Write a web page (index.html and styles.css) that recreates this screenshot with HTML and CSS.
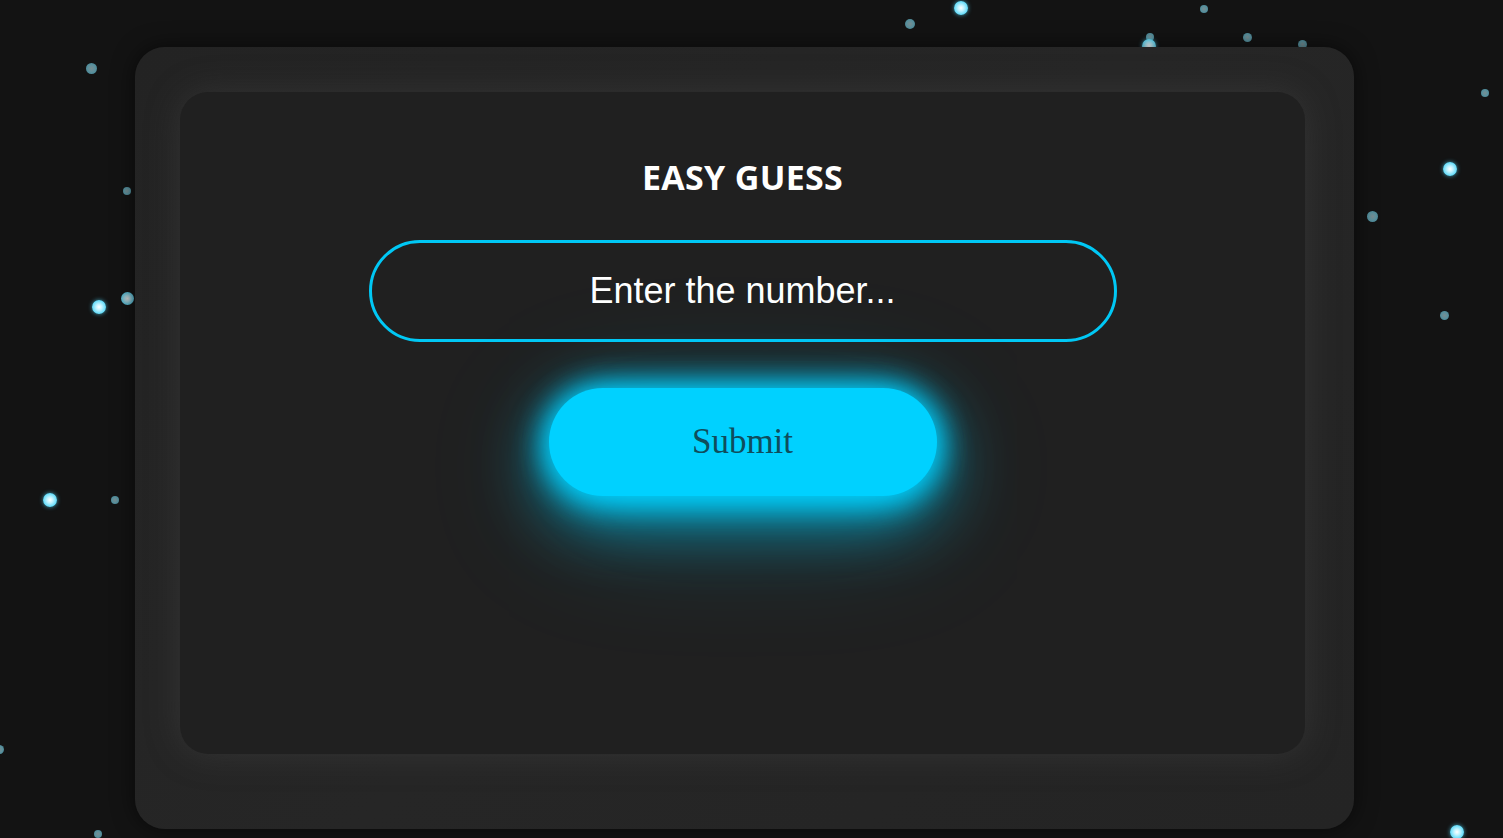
FILE: index.html
```html
<!DOCTYPE html>
<html lang="en">
<head>
<meta charset="utf-8">
<title>Easy Guess</title>
<link rel="stylesheet" href="styles.css">
</head>
<body>
<div class="particles">
  <span class="dot dim" style="left:86px;top:63px;width:11px;height:11px"></span>
  <span class="dot dim" style="left:123px;top:187px;width:8px;height:8px"></span>
  <span class="dot bright" style="left:92px;top:300px;width:14px;height:14px"></span>
  <span class="dot mid" style="left:121px;top:292px;width:13px;height:13px"></span>
  <span class="dot bright" style="left:43px;top:493px;width:14px;height:14px"></span>
  <span class="dot dim" style="left:111px;top:496px;width:8px;height:8px"></span>
  <span class="dot dim" style="left:-5px;top:745px;width:9px;height:9px"></span>
  <span class="dot dim" style="left:94px;top:830px;width:8px;height:8px"></span>
  <span class="dot dim" style="left:905px;top:19px;width:10px;height:10px"></span>
  <span class="dot bright" style="left:954px;top:1px;width:14px;height:14px"></span>
  <span class="dot dim" style="left:1146px;top:33px;width:8px;height:8px"></span>
  <span class="dot bright" style="left:1142px;top:39px;width:14px;height:14px"></span>
  <span class="dot dim" style="left:1200px;top:5px;width:8px;height:8px"></span>
  <span class="dot dim" style="left:1243px;top:33px;width:9px;height:9px"></span>
  <span class="dot dim" style="left:1298px;top:40px;width:9px;height:9px"></span>
  <span class="dot dim" style="left:1481px;top:89px;width:8px;height:8px"></span>
  <span class="dot bright" style="left:1443px;top:162px;width:14px;height:14px"></span>
  <span class="dot dim" style="left:1367px;top:211px;width:11px;height:11px"></span>
  <span class="dot dim" style="left:1440px;top:311px;width:9px;height:9px"></span>
  <span class="dot bright" style="left:1450px;top:825px;width:14px;height:14px"></span>
</div>
<div class="page">
  <div class="outer">
    <div class="inner">
      <h1 class="title">EASY GUESS</h1>
      <input class="guess" type="text" placeholder="Enter the number...">
      <button class="submit" type="button">Submit</button>
    </div>
  </div>
</div>
</body>
</html>
```

FILE: styles.css
```css
* { box-sizing: border-box; }
html, body { margin: 0; padding: 0; }
body {
  background: #131313;
  width: 1503px;
  height: 838px;
  overflow: hidden;
  position: relative;
}
.particles {
  position: absolute;
  inset: 0;
  z-index: 0;
}
.dot {
  position: absolute;
  border-radius: 50%;
  background: radial-gradient(circle at 50% 50%, #ffffff 0%, #bff3ff 30%, #4fd6f7 75%, #2fc4ea 100%);
}
.dot.bright { box-shadow: 0 0 4px rgba(80, 215, 250, 0.7); }
.dot.mid { opacity: 0.8; }
.dot.dim {
  background: radial-gradient(circle at 50% 50%, #8aa3a8 0%, #6aa6b4 45%, #3f98ad 100%);
  opacity: 0.85;
}
.page {
  position: relative;
  z-index: 1;
  padding: 47px 0 0 135px;
}
.outer {
  width: 1219px;
  height: 782px;
  padding: 45px 49px 75px 45px;
  background: linear-gradient(135deg, #232323 0%, #262626 50%, #242424 100%);
  border-radius: 30px;
  box-shadow: 0 0 22px rgba(0, 0, 0, 0.55);
}
.inner {
  height: 100%;
  background: #202020;
  border-radius: 28px;
  box-shadow: 0 0 34px rgba(70, 70, 70, 0.45);
  display: flex;
  flex-direction: column;
  align-items: center;
  padding-top: 63px;
}
.title {
  margin: 0;
  font-family: "Open Sans", "Noto Sans", sans-serif;
  font-weight: 700;
  font-size: 34px;
  line-height: 44px;
  color: #ffffff;
  letter-spacing: 0.3px;
}
.guess {
  margin-top: 41px;
  width: 748px;
  height: 102px;
  border: 3px solid #00c8f5;
  border-radius: 51px;
  background: transparent;
  color: #ffffff;
  font-family: "Liberation Sans", Arial, sans-serif;
  font-size: 36px;
  text-align: center;
  outline: none;
  padding: 0 20px;
}
.guess::placeholder { color: #ffffff; opacity: 1; }
.submit {
  margin-top: 46px;
  width: 388px;
  height: 108px;
  border: none;
  border-radius: 54px;
  background: #00d1ff;
  color: #0f4d5c;
  font-family: "Liberation Serif", Georgia, serif;
  font-size: 35px;
  cursor: pointer;
  box-shadow: 0 0 30px #00d1ff, 0 4px 36px rgba(0, 209, 255, 0.9), 0 20px 70px rgba(0, 209, 255, 0.8), 0 25px 140px rgba(0, 209, 255, 0.2);
}
```
